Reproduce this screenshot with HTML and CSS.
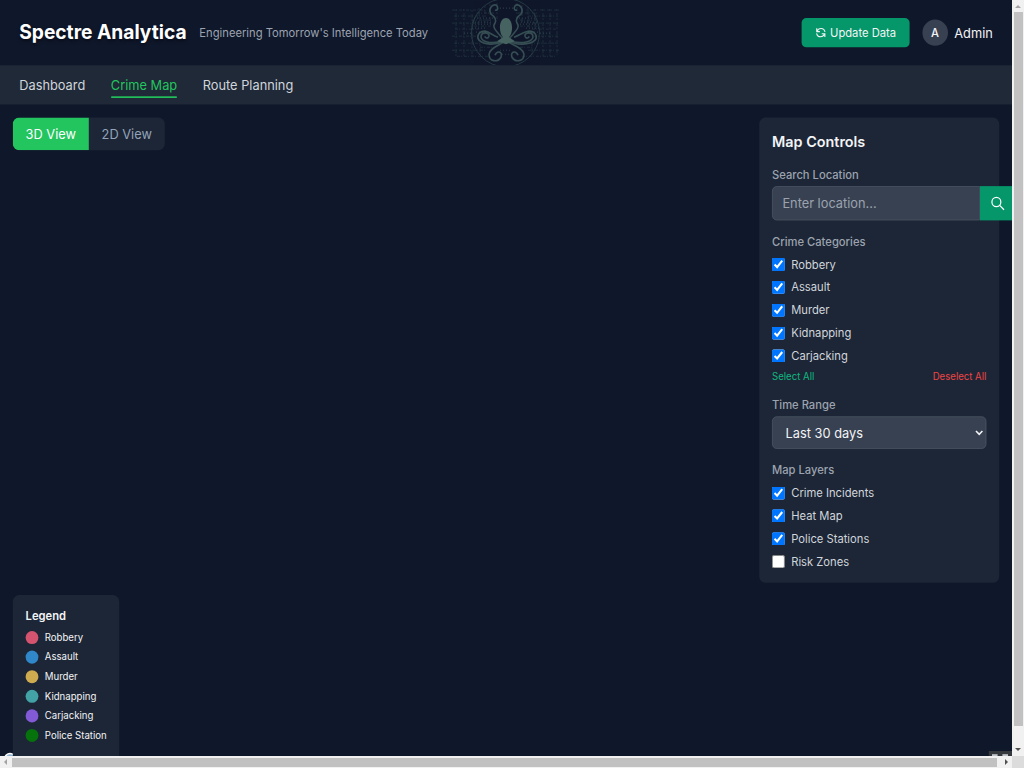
FILE: index.html
```html
<!DOCTYPE html>
<html lang="en">
<head>
<meta charset="utf-8">
<title>Spectre Analytica</title>
<link rel="stylesheet" href="styles.css">
</head>
<body>
<div class="window">
  <div class="page">
    <header class="header">
      <h1 class="brand">Spectre Analytica</h1>
      <span class="tagline">Engineering Tomorrow's Intelligence Today</span>
      <svg class="emblem" viewBox="0 0 108 65" preserveAspectRatio="none" fill="none">
        <g class="circuit">
          <path stroke-dasharray="3 1 1 2" d="M0 10h34M2 16h30M0 23h28M3 29h24M0 36h24M2 43h28M0 50h33M5 56h34M74 10h33M76 16h28M80 23h28M80 29h24M82 36h24M78 43h28M76 50h31M70 56h34M25 13h18M66 13h20M20 20h20M68 20h18M22 26h18M68 26h18M28 47h12M68 47h12"/>
          <path stroke-dasharray="2 2 4 1" d="M4 9v48M12 9v48M20 10v46M27 8v18M33 6v18M38 4v20M70 5v18M76 7v20M83 9v20M91 9v48M98 9v48M105 9v46M28 44v13M80 44v13M45 3v16M65 3v16"/>
          <path stroke-dasharray="1 2" stroke-width="1.200" d="M22 18h20M20 22h19M23 24h16M20 28h14M67 18h18M69 22h18M68 24h16M74 28h14M48 50h12M50 54h8M48 8h14M24 32h10M76 32h10M12 33h9M88 33h10"/>
        </g>
        <circle class="ring" cx="53.500" cy="32.500" r="34"/>
        <g class="arms">
          <path d="M43 23C45 19 42 16 39 14C36 9 40 4 44 5C47 7 46 11 43 10M43 23C39 28 47 33 51 39"/>
          <path d="M65 23C63 19 66 16 69 14C72 9 68 4 64 5C61 7 62 11 65 10M65 23C69 28 61 33 57 39"/>
          <path d="M52 40C43 44 30 43 29 37C29 31 38 32 37 36C36 39 33 38 33 36"/>
          <path d="M56 40C65 44 80 43 81 37C81 31 72 32 73 36C74 39 77 38 77 36"/>
          <path d="M52 41C44 45 32 45 27 40C24 36 27 31 33 31C38 32 40 35 46 37"/>
          <path d="M56 41C64 45 78 45 83 40C86 36 83 31 77 31C70 32 68 35 62 37"/>
          <path d="M53 41C48 45 38 47 37 54C37 62 46 62 49 57C51 51 45 50 43 55"/>
          <path d="M55 41C60 45 71 47 72 54C72 62 63 62 60 57C58 51 64 50 66 55"/>
        </g>
        <path class="head" d="M54 18C46.500 18 46.500 33 51 37L45 41L54 44L63 41L57 37C61.500 33 61.500 18 54 18Z"/>
      </svg>
      <div class="account">
        <button class="update">
          <svg class="update-icon" viewBox="0 0 16 16"><path d="M2.200 2v4.500H6.700M13.800 14V9.500H9.300M2.600 6C4 3 6 2.200 8.300 2.200c3 0 5.100 1.800 5.700 4.800M13.400 10C12 13 10 13.800 7.700 13.800c-3 0-5.100-1.800-5.700-4.800"/></svg>
          Update Data
        </button>
        <span class="avatar">A</span>
        <span class="user">Admin</span>
      </div>
    </header>
    <nav class="nav">
      <a class="nav-link">Dashboard</a>
      <a class="nav-link active">Crime Map</a>
      <a class="nav-link">Route Planning</a>
    </nav>
    <main class="map">
      <div class="toggle"><button class="view on">3D View</button><button class="view">2D View</button></div>
      <aside class="panel">
        <h2 class="panel-title">Map Controls</h2>
        <div class="label">Search Location</div>
        <div class="search">
          <input class="search-input" type="text" placeholder="Enter location...">
          <button class="search-button"><svg class="search-icon" viewBox="0 0 20 20"><circle cx="8.300" cy="8.300" r="6.200"/><path d="M12.900 12.900L18.500 18.500"/></svg></button>
        </div>
        <div class="label">Crime Categories</div>
        <div class="checks">
          <label class="check"><input type="checkbox" class="box" checked>Robbery</label>
          <label class="check"><input type="checkbox" class="box" checked>Assault</label>
          <label class="check"><input type="checkbox" class="box" checked>Murder</label>
          <label class="check"><input type="checkbox" class="box" checked>Kidnapping</label>
          <label class="check"><input type="checkbox" class="box" checked>Carjacking</label>
        </div>
        <div class="bulk"><span class="all">Select All</span><span class="none">Deselect All</span></div>
        <div class="label">Time Range</div>
        <select class="range"><option>Last 30 days</option></select>
        <div class="label">Map Layers</div>
        <div class="checks">
          <label class="check"><input type="checkbox" class="box" checked>Crime Incidents</label>
          <label class="check"><input type="checkbox" class="box" checked>Heat Map</label>
          <label class="check"><input type="checkbox" class="box" checked>Police Stations</label>
          <label class="check"><input type="checkbox" class="box">Risk Zones</label>
        </div>
      </aside>
      <span class="map-logo"></span>
      <section class="legend">
        <h3 class="legend-title">Legend</h3>
        <div class="legend-row"><i class="dot robbery"></i>Robbery</div>
        <div class="legend-row"><i class="dot assault"></i>Assault</div>
        <div class="legend-row"><i class="dot murder"></i>Murder</div>
        <div class="legend-row"><i class="dot kidnapping"></i>Kidnapping</div>
        <div class="legend-row"><i class="dot carjacking"></i>Carjacking</div>
        <div class="legend-row"><i class="dot police"></i>Police Station</div>
      </section>
      <span class="map-corner"><i></i><i></i></span>
    </main>
  </div>
  <div class="vbar">
    <svg class="arrow" viewBox="0 0 12 12"><path fill="#a3a3a3" d="M3 8L6 5L9 8Z"/></svg>
    <div class="vthumb"></div>
    <svg class="arrow" viewBox="0 0 12 12"><path fill="#505050" d="M3 4L6 7L9 4Z"/></svg>
  </div>
  <div class="hbar">
    <svg class="arrow" viewBox="0 0 12 12"><path fill="#a3a3a3" d="M7 3L4 6L7 9Z"/></svg>
    <div class="hthumb"></div>
    <svg class="arrow" viewBox="0 0 12 12"><path fill="#505050" d="M5 3L8 6L5 9Z"/></svg>
  </div>
  <div class="bar-corner"></div>
</div>
</body>
</html>
```
FILE: styles.css
```css
* { box-sizing: border-box; }
body { margin: 0; overflow: hidden; background: #0f172a; font-family: Inter, "Liberation Sans", sans-serif; }
h1, h2, h3 { margin: 0; }
button, input, select { font-family: inherit; }
.window { display: grid; grid-template-columns: 1012px 12px; grid-template-rows: 756px 12px; width: 1024px; height: 768px; }
.page { transform: scale(0.8, 0.8163); transform-origin: 0 0; width: 1265px; height: 926px; overflow: hidden; display: flex; flex-direction: column; color: #f3f4f6; line-height: 24px; background: #0f172a; }
.header { flex: none; height: 80px; padding: 0 24px; display: flex; align-items: center; }
.brand { font-size: 24px; line-height: 32px; font-weight: 700; color: #fff; text-shadow: 0 2px 4px rgba(0, 0, 0, .5); white-space: nowrap; }
.tagline { margin-left: 16px; font-size: 14px; color: #9ca3af; white-space: nowrap; }
.emblem { margin-left: 30px; width: 135px; height: 80px; flex: none; overflow: hidden; }
.circuit { stroke: #39575b; stroke-width: .6; opacity: .6; }
.ring { stroke: #304b50; stroke-width: .7; }
.arms { stroke: #405d5e; stroke-width: 1.600; opacity: .8; }
.head { fill: #466361; }
.account { margin-left: auto; display: flex; align-items: center; }
.update { width: 135px; height: 36px; padding: 0; border: 0; border-radius: 6px; background: #059669; color: #f3f4f6; font-size: 14px; line-height: 20px; display: flex; align-items: center; justify-content: center; gap: 5px; white-space: nowrap; }
.update-icon { width: 14px; height: 14px; fill: none; stroke: currentColor; stroke-width: 1.600; }
.avatar { margin-left: 16px; width: 32px; height: 32px; border-radius: 50%; background: #374151; display: flex; align-items: center; justify-content: center; font-size: 14px; font-weight: 500; }
.user { margin-left: 8px; }
.nav { flex: none; height: 48px; padding: 0 24px; background: #1f2937; display: flex; align-items: center; gap: 32px; color: #d1d5db; }
.nav-link { height: 32px; padding: 4px 0 2px; border-bottom: 2px solid transparent; }
.nav-link.active { color: #22c55e; border-color: #22c55e; }
.map { flex: 1; min-height: 0; padding: 16px 16px 0; display: grid; grid-template-columns: 1fr 300px; grid-template-rows: 569px 1fr; position: relative; }
.toggle { height: 40px; width: max-content; display: flex; border-radius: 8px; overflow: hidden; background: #1c2636; }
.view { border: 0; padding: 0 16px; background: transparent; color: #94a3b8; font-size: 16px; }
.view.on { background: #22c55e; color: #fff; }
.panel { height: 570px; padding: 16px; border-radius: 8px; background: #1c2636; }
.panel-title { font-size: 18px; line-height: 28px; font-weight: 600; margin-bottom: 16px; }
.label { font-size: 14px; line-height: 20px; font-weight: 500; margin-bottom: 4px; color: #9ca3af; }
.search { height: 42px; margin-bottom: 16px; display: flex; }
.search-input { flex: none; width: 260px; padding: 0 12px; font-size: 16px; border: 1px solid #4b5563; background: #374151; border-radius: 6px 0 0 6px; color: #fff; }
.search-input::placeholder { color: #9ca3af; }
.search-button { flex: none; width: 44px; padding: 0; border: 0; background: #059669; display: flex; align-items: center; justify-content: center; }
.search-icon { width: 18px; height: 18px; fill: none; stroke: #fff; stroke-width: 1.700; stroke-linecap: round; }
.checks { padding-top: 2px; display: flex; flex-direction: column; gap: 4px; }
.check { height: 24px; display: flex; align-items: center; font-size: 14px; color: #d1d5db; }
.box { margin: 0 8px 0 0; width: 16px; height: 16px; }
.bulk { margin: 6px 0 16px; display: flex; justify-content: space-between; font-size: 12px; line-height: 16px; }
.all { color: #10b981; }
.none { color: #ef4444; }
.range { display: block; width: 100%; height: 40px; margin-bottom: 16px; padding: 0 12px; font-size: 16px; color: #f3f4f6; background: #374151; border: 1px solid #4b5563; border-radius: 6px; }
.legend { grid-row: 2; grid-column: 1; position: relative; margin-top: 16px; width: 133px; padding: 16px; border-radius: 8px 8px 0 0; background: #1c2636; }
.legend-title { font-size: 14px; line-height: 20px; font-weight: 600; margin-bottom: 4px; }
.legend-row { height: 24px; display: flex; align-items: center; font-size: 12px; white-space: nowrap; }
.dot { flex: none; width: 16px; height: 16px; margin-right: 8px; border-radius: 50%; }
.robbery { background: #d4546f; }
.assault { background: #3088ca; }
.murder { background: #cfab50; }
.kidnapping { background: #43a2a6; }
.carjacking { background: #825ad6; }
.police { background: #06720c; }
.map-logo { position: absolute; left: 5px; bottom: -11px; width: 15px; height: 15px; border-radius: 50%; background: #91b4d0; border: 2px solid #fff; }
.map-corner { position: absolute; right: 0; bottom: 0; width: 29px; height: 6px; background: #35383d; display: flex; gap: 6px; padding: 4px 4px 0; }
.map-corner i { width: 7px; height: 2px; background: #d1d5db; }
.vbar { background: #f1f1f1; display: flex; flex-direction: column; position: relative; }
.vthumb { width: 9px; height: 714px; margin-left: 2px; background: #c1c1c1; }
.hbar { background: #f1f1f1; display: flex; position: relative; }
.hthumb { width: 985px; height: 9px; margin-top: 2px; background: #c1c1c1; }
.arrow { flex: none; width: 12px; height: 12px; }
.vbar .arrow:last-child { margin-top: auto; }
.hbar .arrow:last-child { margin-left: auto; }
.bar-corner { background: #dcdcdc; position: relative; }
```
